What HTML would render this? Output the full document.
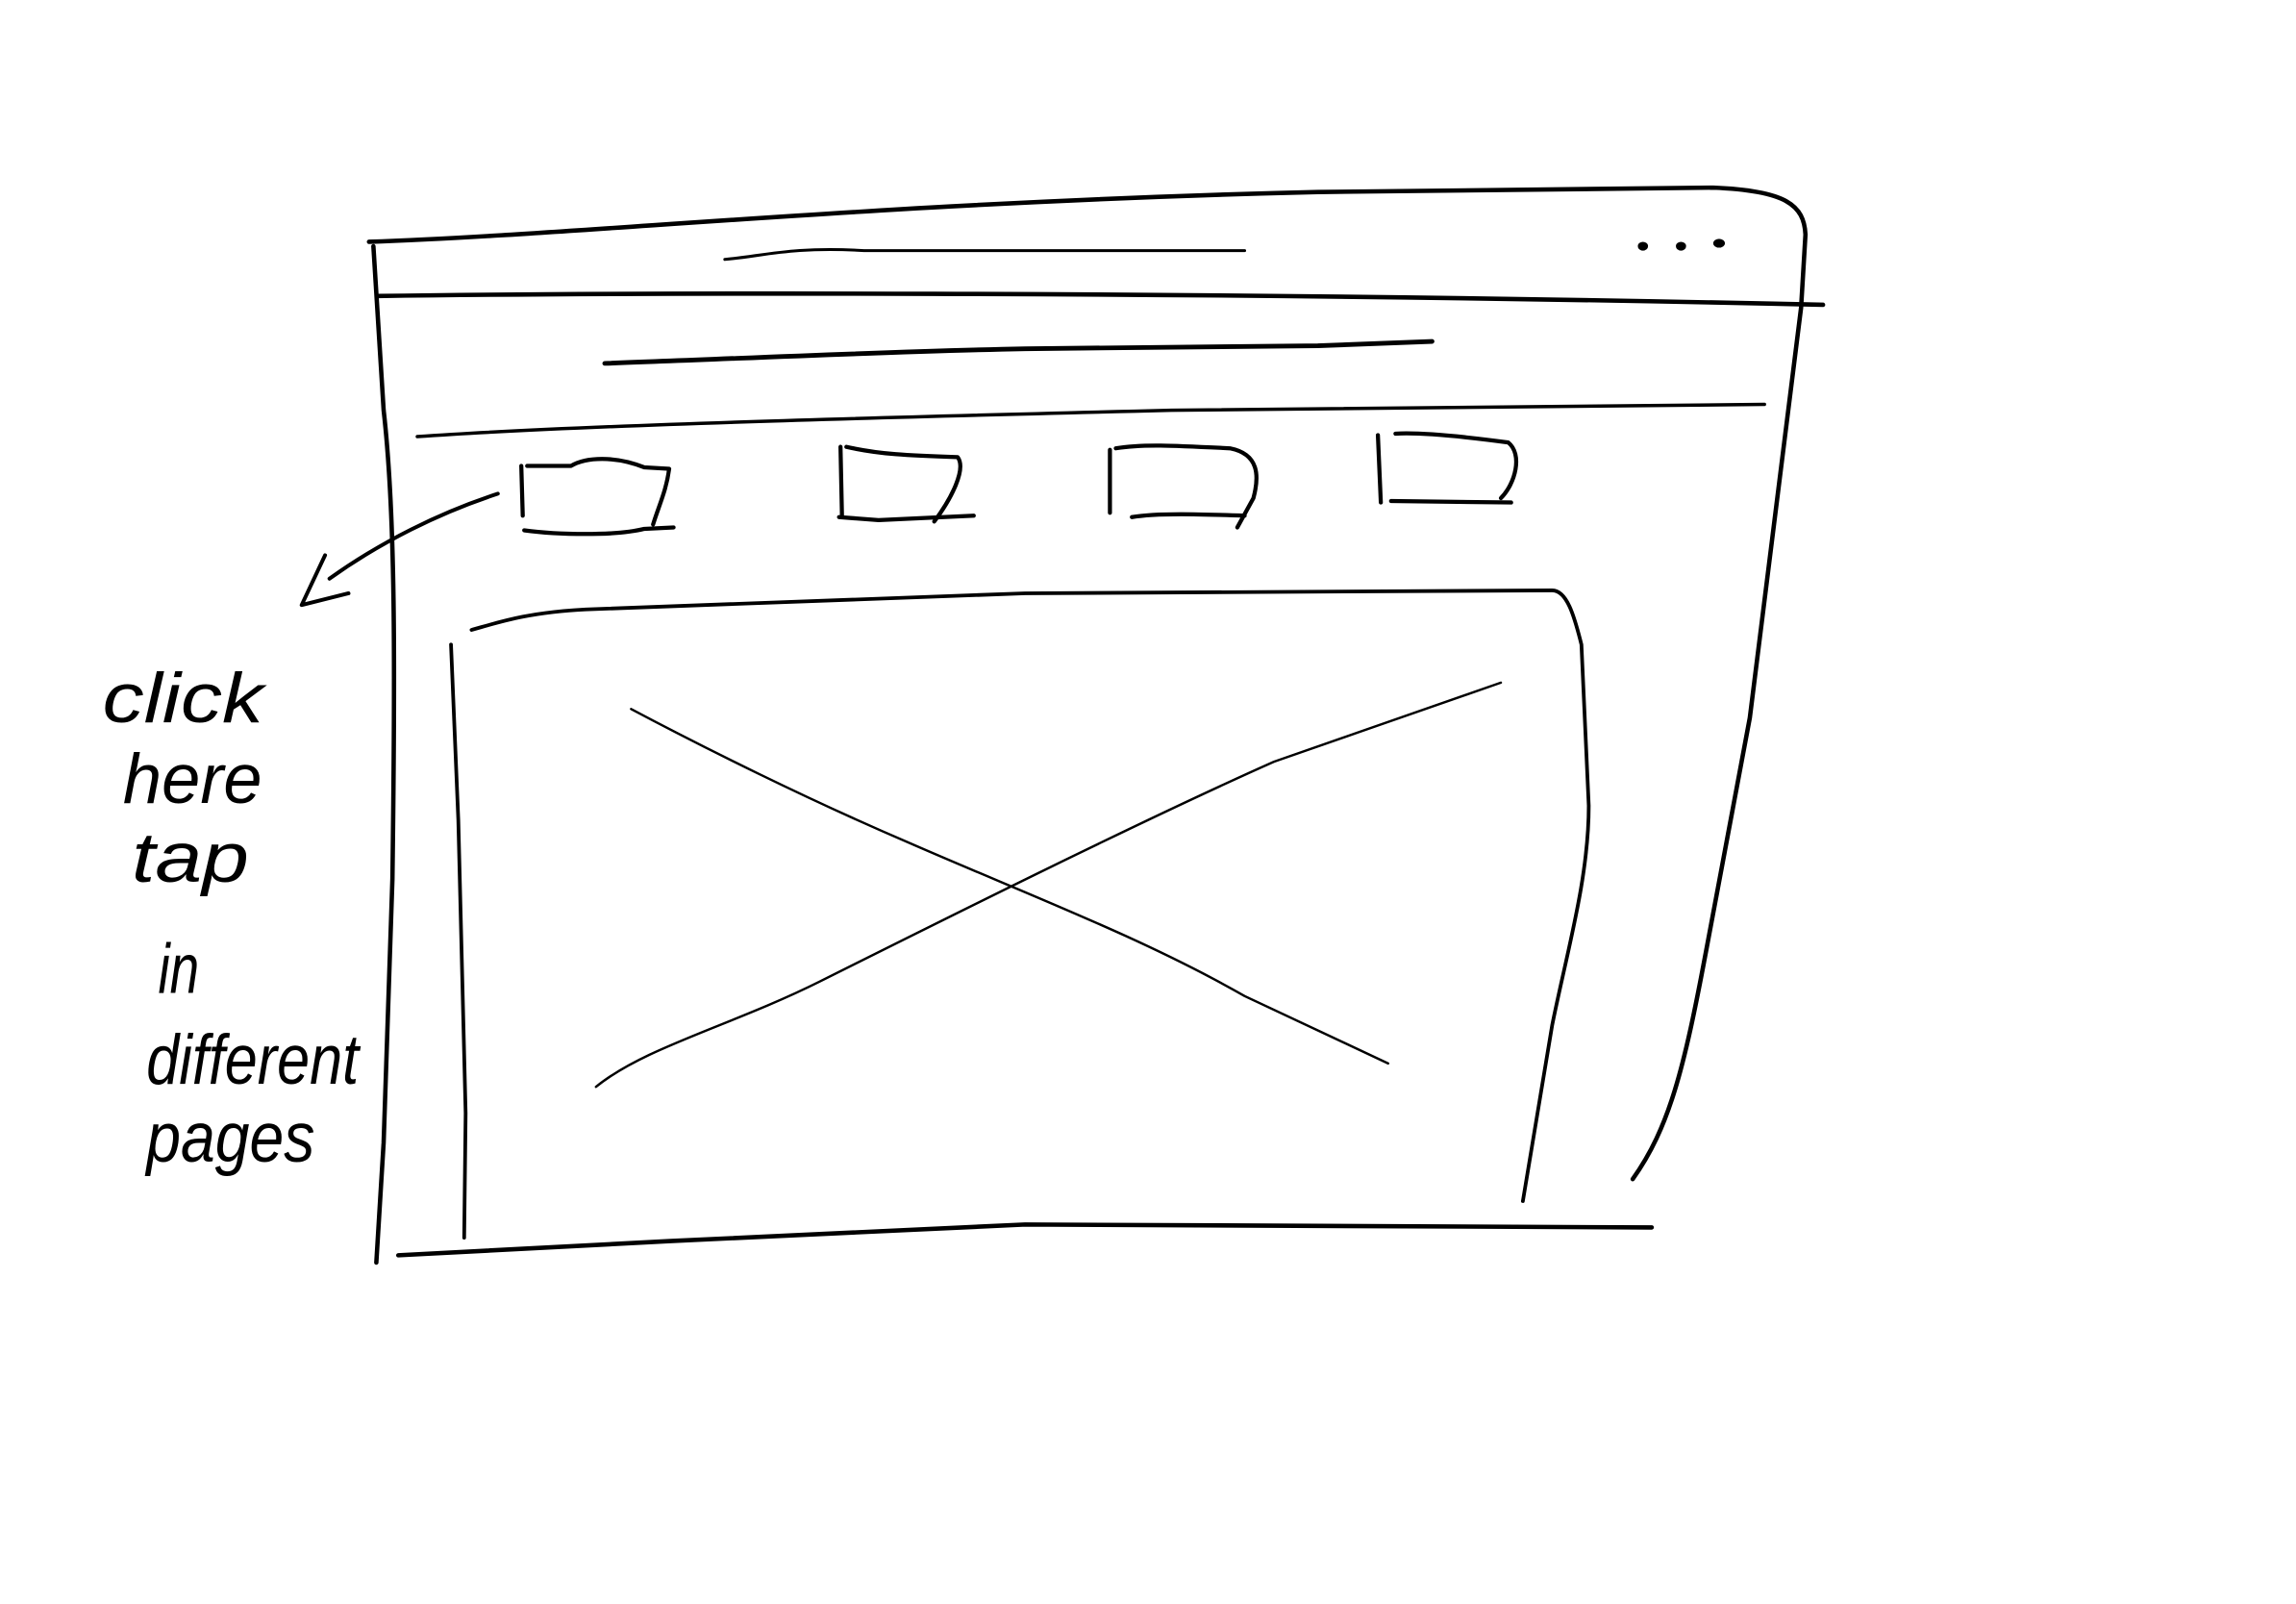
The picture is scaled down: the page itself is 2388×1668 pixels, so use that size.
<!DOCTYPE html>
<html><head><meta charset="utf-8"><style>
html,body{margin:0;padding:0;background:#fff;width:2388px;height:1668px;overflow:hidden}
svg{display:block}
</style></head><body>
<svg width="2388" height="1668" viewBox="0 0 1568 1095" xmlns="http://www.w3.org/2000/svg">
<g fill="none" stroke="#000" stroke-linecap="round" stroke-linejoin="round">
<path d="M252 165 C400 160,600 138,900 131 L1170 128 C1220 130,1232 140,1233 160 L1230 210 L1215 330 L1195 490 L1165 650 C1150 730,1140 770,1115 805" stroke-width="3"/>
<path d="M255 168 L262 280 C270 350,270 450,268 600 L262 780 L257 862" stroke-width="3"/>
<path d="M258 202 C400 200,800 198,1245 208" stroke-width="3"/>
<path d="M495 177 C520 175,540 168,590 171 L850 171" stroke-width="2"/>
<path d="M413 248 C500 245,600 240,700 238 L900 236 L978 233" stroke-width="3.2"/>
<path d="M285 298 C400 290,600 285,800 280 L1205 276" stroke-width="2.3"/>
<path d="M356 318 L357 352 M360 318 L390 318 C400 312,420 311,440 319 L457 320 C455 335,450 345,446 358 M358 362 C380 365,420 366,440 361 L460 360" stroke-width="2.8"/>
<path d="M574 305 L575 352 M578 305 C600 310,620 311,654 312 C660 320,650 340,638 356 M573 353 L600 355 L665 352" stroke-width="2.8"/>
<path d="M758 307 L758 350 M762 306 C780 303,800 304,840 306 C860 310,860 325,856 340 L845 360 M773 353 C790 350,820 351,850 352" stroke-width="2.8"/>
<path d="M941 297 L943 343 M953 296 C970 295,1000 298,1030 302 C1040 310,1035 330,1025 340 M950 342 L1032 343" stroke-width="2.8"/>
<path d="M340 337 C300 350,260 370,225 395 M222 379 L206 413 L238 405" stroke-width="2.6"/>
<path d="M322 430 C340 425,360 418,400 416 L700 405 L1060 403 C1070 403,1075 420,1080 440 L1085 550 C1085 600,1070 650,1060 700 L1040 820" stroke-width="2.5"/>
<path d="M308 440 L313 560 L318 760 L317 845" stroke-width="2.5"/>
<path d="M272 857 C400 850,600 840,700 836 L1128 838" stroke-width="3"/>
<path d="M431 484 C480 510,550 545,620 575 C700 610,780 640,850 680 L948 726" stroke-width="1.6"/>
<path d="M407 742 C440 715,500 700,560 670 C650 625,780 560,870 520 L1025 466" stroke-width="1.6"/>
</g>
<g fill="#000"><ellipse cx="1122" cy="168" rx="3.5" ry="3"/><ellipse cx="1148" cy="168" rx="3.5" ry="3"/><ellipse cx="1174" cy="166" rx="4" ry="3"/></g>
<g font-family="'Liberation Sans', sans-serif" font-size="48" fill="#000" font-style="italic" font-weight="300">
<text x="70" y="493" textLength="110" lengthAdjust="spacingAndGlyphs">click</text>
<text x="84" y="548" textLength="95" lengthAdjust="spacingAndGlyphs">here</text>
<text x="90" y="602" textLength="80" lengthAdjust="spacingAndGlyphs">tap</text>
<text x="108" y="678" textLength="28" lengthAdjust="spacingAndGlyphs">in</text>
<text x="100" y="740" textLength="145" lengthAdjust="spacingAndGlyphs">different</text>
<text x="100" y="793" textLength="115" lengthAdjust="spacingAndGlyphs">pages</text>
</g>
</svg>
</body></html>
